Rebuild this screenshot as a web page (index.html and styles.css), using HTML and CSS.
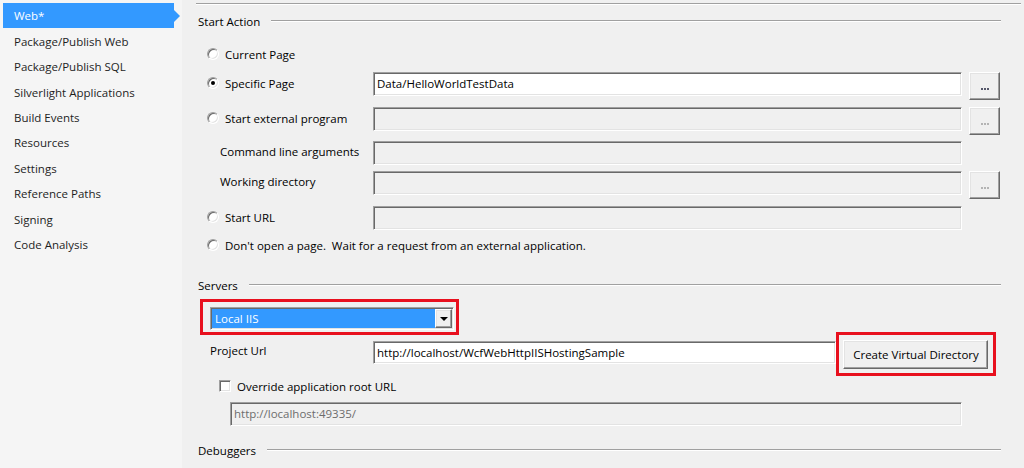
FILE: index.html
```html
<!DOCTYPE html>
<html>
<head>
<meta charset="utf-8">
<link rel="stylesheet" href="styles.css">
</head>
<body>
<div class="window">
  <nav class="sidebar">
    <div class="nav-item selected">Web*</div>
    <div class="nav-item">Package/Publish Web</div>
    <div class="nav-item">Package/Publish SQL</div>
    <div class="nav-item">Silverlight Applications</div>
    <div class="nav-item">Build Events</div>
    <div class="nav-item">Resources</div>
    <div class="nav-item">Settings</div>
    <div class="nav-item">Reference Paths</div>
    <div class="nav-item">Signing</div>
    <div class="nav-item">Code Analysis</div>
  </nav>
  <main class="content">
    <div class="top-rule"></div>

    <div class="group-header h-start"><span>Start Action</span><div class="rule"></div></div>

    <div class="row radio-row m-current"><span class="radio"></span><span>Current Page</span></div>

    <div class="row field-row m-specific">
      <div class="lbl"><span class="radio checked"></span>Specific Page</div>
      <div class="field">Data/HelloWorldTestData</div>
      <div class="browse"><span class="dots"><i></i><i></i><i></i></span></div>
    </div>

    <div class="row field-row m-external">
      <div class="lbl"><span class="radio"></span>Start external program</div>
      <div class="field disabled"></div>
      <div class="browse disabled"><span class="dots"><i></i><i></i><i></i></span></div>
    </div>

    <div class="row field-row m-cmd">
      <div class="lbl indent">Command line arguments</div>
      <div class="field disabled"></div>
    </div>

    <div class="row field-row m-workdir">
      <div class="lbl indent">Working directory</div>
      <div class="field disabled"></div>
      <div class="browse disabled"><span class="dots"><i></i><i></i><i></i></span></div>
    </div>

    <div class="row field-row m-url">
      <div class="lbl"><span class="radio"></span>Start URL</div>
      <div class="field disabled"></div>
    </div>

    <div class="row radio-row m-dontopen"><span class="radio"></span><span>Don't open a page.&nbsp; Wait for a request from an external application.</span></div>

    <div class="group-header h-servers"><span>Servers</span><div class="rule"></div></div>

    <div class="row m-combo">
      <div class="callout callout-combo">
        <div class="combo">
          <div class="combo-value">Local IIS</div>
          <div class="combo-arrow"><span class="tri"></span></div>
        </div>
      </div>
    </div>

    <div class="row project-row m-project">
      <div class="lbl project-lbl">Project Url</div>
      <div class="field project-field">http://localhost/WcfWebHttpIISHostingSample</div>
      <div class="callout callout-btn">
        <div class="btn">Create Virtual Directory</div>
      </div>
    </div>

    <div class="row check-row m-override"><span class="check"></span><span>Override application root URL</span></div>

    <div class="row m-rooturl">
      <div class="field disabled root-field">http://localhost:49335/</div>
    </div>

    <div class="group-header h-debuggers"><span>Debuggers</span><div class="rule"></div></div>
  </main>
</div>
</body>
</html>
```

FILE: styles.css
```css
* { box-sizing: border-box; }

body {
  margin: 0;
  background: #f0f0f0;
  font-family: "Open Sans", "Noto Sans", sans-serif;
  font-size: 11.5px;
  color: #000;
}

.window {
  display: flex;
  width: 1024px;
  height: 468px;
  overflow: hidden;
}

/* ---------- sidebar ---------- */
.sidebar {
  width: 182px;
  flex: none;
  background: #f5f5f5;
  padding-top: 3px;
}

.nav-item {
  position: relative;
  height: 25.45px;
  margin-left: 3px;
  margin-right: 8px;
  padding-left: 11px;
  display: flex;
  align-items: center;
  color: #1e1e1e;
  white-space: nowrap;
}

.nav-item.selected {
  background: #3399ff;
  color: #fff;
}

.nav-item.selected::after {
  content: "";
  position: absolute;
  right: -6px;
  top: 7px;
  border-left: 6px solid #3399ff;
  border-top: 6px solid transparent;
  border-bottom: 6px solid transparent;
}

/* ---------- content ---------- */
.content {
  flex: 1;
  padding: 3px 3px 0 14px;
  display: flex;
  flex-direction: column;
  white-space: nowrap;
}

.top-rule {
  flex: none;
  height: 2px;
  border-top: 1px solid #a0a0a0;
  border-bottom: 1px solid #fff;
}

.group-header {
  flex: none;
  display: flex;
  align-items: center;
  height: 18px;
  padding-left: 2px;
  margin-right: 20px;
}

.group-header .rule {
  flex: 1;
  margin-left: 11px;
  height: 2px;
  border-top: 1px solid #a0a0a0;
  border-bottom: 1px solid #fff;
}

.row {
  display: flex;
  flex: none;
}

.radio-row {
  height: 18px;
  align-items: center;
  padding-left: 11px;
}

.field-row {
  height: 24px;
  align-items: flex-start;
}

.lbl {
  width: 177px;
  height: 24px;
  flex: none;
  display: flex;
  align-items: center;
  padding-left: 11px;
  padding-bottom: 2px;
}

.lbl.indent {
  padding-left: 24px;
  padding-bottom: 4px;
}

/* radio / check */
.radio {
  position: relative;
  width: 12px;
  height: 12px;
  flex: none;
  margin-right: 6px;
  border-radius: 50%;
  background: #fff;
  border: 1px solid;
  border-color: #a0a0a0 #fff #fff #a0a0a0;
  box-shadow: inset 1px 1px 0 #696969, inset -1px -1px 0 #e3e3e3;
}

.radio.checked::after {
  content: "";
  position: absolute;
  left: 3px;
  top: 3px;
  width: 4px;
  height: 4px;
  border-radius: 50%;
  background: #000;
}

.check-row {
  height: 18px;
  align-items: center;
  padding-left: 23px;
}

.check {
  width: 12px;
  height: 12px;
  flex: none;
  margin-right: 6px;
  background: #fff;
  border: 1px solid;
  border-color: #a0a0a0 #fff #fff #a0a0a0;
  box-shadow: inset 1px 1px 0 #696969, inset -1px -1px 0 #e3e3e3;
}

/* text fields */
.field {
  width: 589px;
  height: 24px;
  flex: none;
  display: flex;
  align-items: center;
  padding-left: 3px;
  padding-bottom: 1px;
  background: #fff;
  border: 1px solid;
  border-color: #a0a0a0 #fff #fff #a0a0a0;
  box-shadow: inset 1px 1px 0 #696969, inset -1px -1px 0 #e3e3e3;
}

.field.disabled {
  background: #f0f0f0;
  color: #6d6d6d;
}

/* buttons */
.browse,
.btn,
.combo-arrow {
  background: #f0f0f0;
  border: 1px solid;
  border-color: #fff #696969 #696969 #fff;
  box-shadow: inset -1px -1px 0 #a0a0a0, inset 1px 1px 0 #e3e3e3;
}

.browse {
  width: 31px;
  height: 28px;
  flex: none;
  margin-left: 7px;
  display: flex;
  align-items: flex-end;
  justify-content: center;
  padding-bottom: 9px;
}

.dots {
  display: flex;
  gap: 1px;
}

.dots i {
  width: 2px;
  height: 2px;
  background: #55576a;
}

.browse.disabled .dots i {
  background: #b4b4b4;
}

.btn {
  width: 145px;
  height: 29px;
  display: flex;
  align-items: center;
  justify-content: center;
  padding-left: 1px;
}

/* annotation callouts */
.callout {
  flex: none;
  border: 3px solid #e8101e;
}

.callout-combo {
  margin-left: 4px;
  width: 259px;
  padding: 5px 2px 2px 7px;
}

.callout-btn {
  align-self: flex-start;
  margin-top: -9px;
  padding: 5px 5px 4px 4px;
}

/* combobox */
.combo {
  width: 244px;
  height: 23px;
  display: flex;
  padding: 1px;
  background: #fff;
  border: 1px solid;
  border-color: #a0a0a0 #fff #fff #a0a0a0;
  box-shadow: inset 1px 1px 0 #696969, inset -1px -1px 0 #e3e3e3;
}

.combo-value {
  flex: 1;
  display: flex;
  align-items: center;
  padding-left: 3px;
  background: #3399ff;
  color: #fff;
}

.combo-arrow {
  width: 17px;
  flex: none;
  display: flex;
  align-items: center;
  justify-content: center;
}

.tri {
  width: 0;
  height: 0;
  border-top: 4px solid #000;
  border-left: 4px solid transparent;
  border-right: 4px solid transparent;
  margin-top: 1px;
}

/* project url row */
.project-row {
  height: 23px;
  align-items: flex-start;
}

.project-lbl {
  height: 19px;
  padding-left: 14px;
  padding-bottom: 0;
}

.project-field {
  width: 463px;
  height: 23px;
}

.root-field {
  width: 732px;
  margin-left: 34px;
}

/* vertical rhythm */
.h-start { margin-top: 7px; }
.m-current { margin-top: 15px; }
.m-specific { margin-top: 9px; }
.m-external { margin-top: 11px; }
.m-cmd { margin-top: 10px; }
.m-workdir { margin-top: 6px; }
.m-url { margin-top: 11px; }
.m-dontopen { margin-top: 6px; }
.h-servers { margin-top: 22px; }
.m-combo { margin-top: 5px; }
.m-project { margin-top: 6px; }
.m-override { margin-top: 13px; }
.m-rooturl { margin-top: 7px; }
.h-debuggers { margin-top: 15px; }
```
